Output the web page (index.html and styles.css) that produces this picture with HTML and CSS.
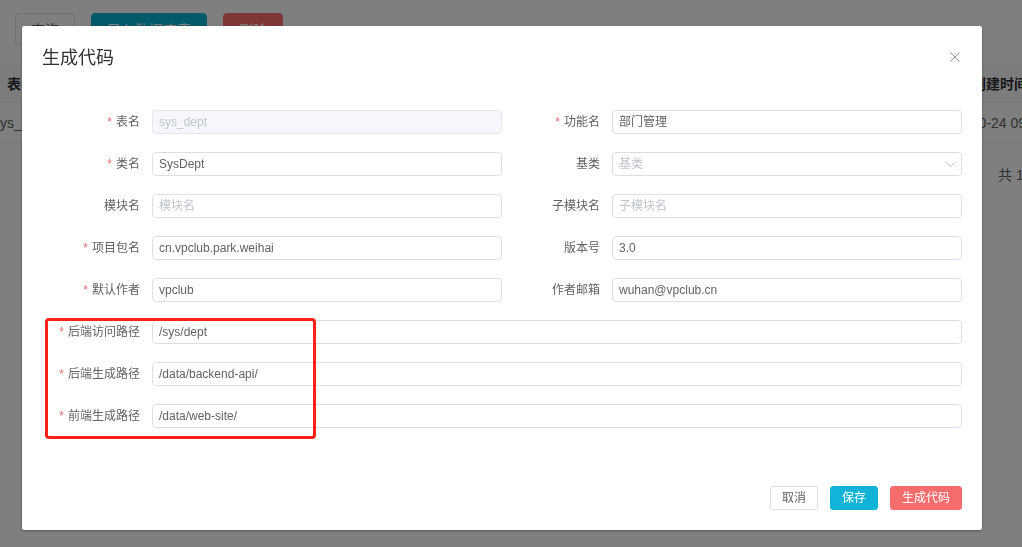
FILE: index.html
```html
<!DOCTYPE html>
<html lang="zh-CN">
<head>
<meta charset="utf-8">
<title>生成代码</title>
<link rel="stylesheet" href="styles.css">
</head>
<body>
<div class="page">
    <div class="toolbar">
        <button class="btn-lg">查询</button>
        <button class="btn-lg teal">导入数据库表</button>
        <button class="btn-lg red">删除</button>
    </div>
    <div class="table">
        <div class="tr head">
            <div class="td td-name">表名</div>
            <div class="td td-mid">表描述</div>
            <div class="td td-time">创建时间</div>
        </div>
        <div class="tr">
            <div class="td td-name">sys_dept</div>
            <div class="td td-mid">部门表</div>
            <div class="td td-time">2019-10-24 09:34:12</div>
        </div>
    </div>
    <div class="pager">共 1 条</div>
</div>

<div class="mask"></div>

<div class="dialog-wrap">
    <div class="dialog">
        <div class="dialog-header">
            <span class="dialog-title">生成代码</span>
            <button class="dialog-close" aria-label="关闭">
                <svg width="10" height="10" viewBox="0 0 10 10">
                    <path d="M0.5 0.5 L9.5 9.5 M9.5 0.5 L0.5 9.5" stroke="#909399" stroke-width="1" fill="none"/>
                </svg>
            </button>
        </div>

        <div class="dialog-body">
            <form class="form">
                <div class="item">
                    <label class="label required">表名</label>
                    <div class="control"><input class="input" value="sys_dept" disabled></div>
                </div>
                <div class="item">
                    <label class="label required">功能名</label>
                    <div class="control"><input class="input cjk" value="部门管理"></div>
                </div>

                <div class="item">
                    <label class="label required">类名</label>
                    <div class="control"><input class="input" value="SysDept"></div>
                </div>
                <div class="item">
                    <label class="label">基类</label>
                    <div class="control select">
                        <input class="input" placeholder="基类" readonly>
                        <svg class="arrow" width="9" height="5" viewBox="0 0 9 5">
                            <path d="M0.5 0.5 L4.5 4.5 L8.5 0.5" stroke="#c0c4cc" stroke-width="1" fill="none"/>
                        </svg>
                    </div>
                </div>

                <div class="item">
                    <label class="label">模块名</label>
                    <div class="control"><input class="input" placeholder="模块名"></div>
                </div>
                <div class="item">
                    <label class="label">子模块名</label>
                    <div class="control"><input class="input" placeholder="子模块名"></div>
                </div>

                <div class="item">
                    <label class="label required">项目包名</label>
                    <div class="control"><input class="input" value="cn.vpclub.park.weihai"></div>
                </div>
                <div class="item">
                    <label class="label">版本号</label>
                    <div class="control"><input class="input" value="3.0"></div>
                </div>

                <div class="item">
                    <label class="label required">默认作者</label>
                    <div class="control"><input class="input" value="vpclub"></div>
                </div>
                <div class="item">
                    <label class="label">作者邮箱</label>
                    <div class="control"><input class="input" value="wuhan@vpclub.cn"></div>
                </div>

                <div class="item full">
                    <label class="label required">后端访问路径</label>
                    <div class="control"><input class="input" value="/sys/dept"></div>
                </div>
                <div class="item full">
                    <label class="label required">后端生成路径</label>
                    <div class="control"><input class="input" value="/data/backend-api/"></div>
                </div>
                <div class="item full">
                    <label class="label required">前端生成路径</label>
                    <div class="control"><input class="input" value="/data/web-site/"></div>
                </div>
            </form>
        </div>

        <div class="dialog-footer">
            <button class="btn">取消</button>
            <button class="btn primary">保存</button>
            <button class="btn danger">生成代码</button>
        </div>

        <!-- 标注框 -->
        <div class="mark"></div>
    </div>
</div>
</body>
</html>
```

FILE: styles.css
```css
* {
    box-sizing: border-box;
}

html, body {
    margin: 0;
    height: 100%;
    overflow: hidden;
}

body {
    font-family: "Liberation Sans", "Noto Sans CJK SC", sans-serif;
    font-size: 14px;
    color: #606266;
    background-color: #ffffff;
}

/* 背景页面 */
.page {
    padding: 13px 0 0 15px;
    width: 1200px;
}

.toolbar {
    display: flex;
    gap: 16px;
}

.btn-lg {
    height: 32px;
    padding: 0 15px;
    border-radius: 4px;
    border: 1px solid #dcdfe6;
    background-color: #ffffff;
    color: #606266;
    font: inherit;
}

.btn-lg.teal {
    background-color: #06b4d6;
    border-color: #06b4d6;
    color: #ffffff;
}

.btn-lg.red {
    background-color: #ff6d6f;
    border-color: #ff6d6f;
    color: #ffffff;
}

.table {
    margin: 19px 0 0 -25px;
    width: 1090px;
}

.tr {
    display: flex;
    align-items: center;
    height: 40px;
    border-bottom: 1px solid #ebeef5;
}

.tr.head {
    height: 39px;
    background-color: #f8f8f9;
    font-weight: bold;
    color: #303133;
}

.td-name {
    width: 62px;
    text-align: center;
    white-space: nowrap;
}

.td-mid {
    flex: 1;
    text-align: center;
}

.td-time {
    width: 160px;
    text-align: center;
    white-space: nowrap;
}

.pager {
    margin: 16px 0 0 983px;
    line-height: 32px;
}

/* 遮罩和弹窗 */
.mask {
    position: fixed;
    top: 0;
    left: 0;
    right: 0;
    bottom: 0;
    background-color: rgba(0, 0, 0, 0.5);
}

.dialog-wrap {
    position: fixed;
    top: 0;
    left: 0;
    right: 0;
    bottom: 0;
}

.dialog {
    position: relative;
    width: 960px;
    margin: 26px 0 0 22px;
    background-color: #ffffff;
    border-radius: 2px;
    box-shadow: 0 1px 3px rgba(0, 0, 0, 0.3);
}

.dialog-header {
    padding: 20px 20px 10px;
}

.dialog-title {
    font-size: 18px;
    line-height: 24px;
    color: #303133;
}

.dialog-close {
    position: absolute;
    top: 26px;
    right: 22px;
    padding: 0;
    border: none;
    background: none;
    line-height: 0;
    cursor: pointer;
}

.dialog-body {
    padding: 30px 20px;
}

.form {
    display: grid;
    grid-template-columns: 1fr 1fr;
    margin: 0;
}

.item {
    display: flex;
    margin-bottom: 18px;
}

.item.full {
    grid-column: span 2;
}

.label {
    width: 110px;
    padding-right: 12px;
    text-align: right;
    font-size: 12px;
    line-height: 24px;
    color: #606266;
}

.label.required::before {
    content: "*";
    color: #f56c6c;
    margin-right: 4px;
}

.control {
    flex: 1;
    position: relative;
}

.input {
    display: block;
    width: 100%;
    height: 24px;
    padding: 0 6px;
    border: 1px solid #dcdfe6;
    border-radius: 4px;
    background-color: #ffffff;
    font-family: "Liberation Sans", "Noto Sans CJK SC", sans-serif;
    font-size: 12px;
    line-height: 22px;
    color: #606266;
    outline: none;
}

/* 纯中文值基线偏低，往上提一点 */
.input.cjk {
    padding-bottom: 3px;
}

.input::placeholder {
    color: #c0c4cc;
}

.input:disabled {
    background-color: #f5f7fa;
    border-color: #e4e7ed;
    color: #c0c4cc;
}

.select .arrow {
    position: absolute;
    right: 7px;
    top: 10px;
}

.dialog-footer {
    display: flex;
    justify-content: flex-end;
    gap: 12px;
    padding: 10px 20px 20px;
}

.btn {
    height: 24px;
    padding: 0 11px;
    border-radius: 3px;
    border: 1px solid #dcdfe6;
    background-color: #ffffff;
    font-family: "Liberation Sans", "Noto Sans CJK SC", sans-serif;
    font-size: 12px;
    line-height: 22px;
    color: #606266;
    cursor: pointer;
}

.btn.primary {
    background-color: #11b4d8;
    border-color: #11b4d8;
    color: #ffffff;
}

.btn.danger {
    background-color: #f56c6c;
    border-color: #f56c6c;
    color: #ffffff;
}

.mark {
    position: absolute;
    left: 23px;
    top: 292px;
    width: 271px;
    height: 121px;
    border: 3px solid #fb2118;
    border-radius: 4px;
    pointer-events: none;
}
```
